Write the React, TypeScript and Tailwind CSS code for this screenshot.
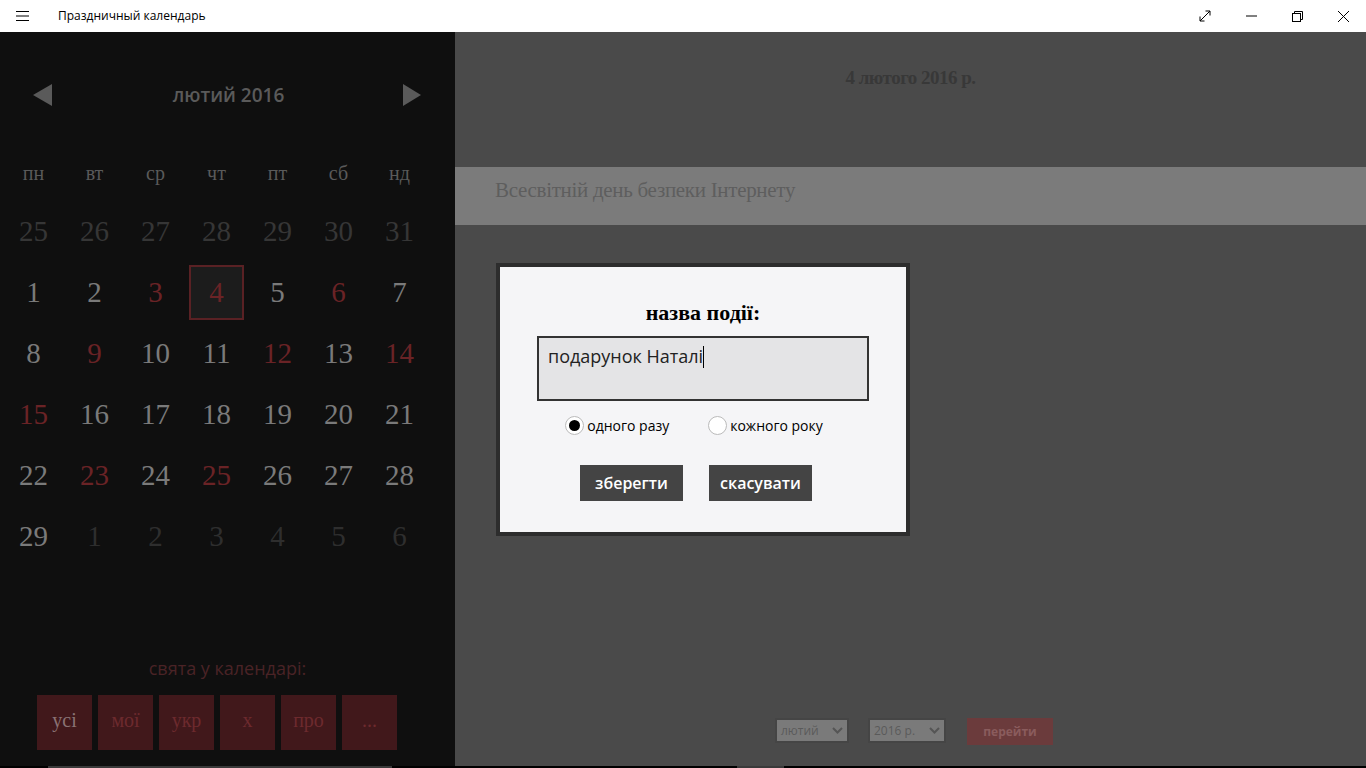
import React from "react";

const sans = { fontFamily: '"Segoe UI", "Open Sans", "Noto Sans", sans-serif' };
const serif = { fontFamily: '"Liberation Serif", "DejaVu Serif", serif' };

type Day = { n: number; c: "prev" | "cur" | "red" | "next" };

const rows: Day[][] = [
  [25, 26, 27, 28, 29, 30, 31].map((n) => ({ n, c: "prev" as const })),
  [
    { n: 1, c: "cur" }, { n: 2, c: "cur" }, { n: 3, c: "red" }, { n: 4, c: "red" }, { n: 5, c: "cur" }, { n: 6, c: "red" }, { n: 7, c: "cur" },
  ],
  [
    { n: 8, c: "cur" }, { n: 9, c: "red" }, { n: 10, c: "cur" }, { n: 11, c: "cur" }, { n: 12, c: "red" }, { n: 13, c: "cur" }, { n: 14, c: "red" },
  ],
  [
    { n: 15, c: "red" }, { n: 16, c: "cur" }, { n: 17, c: "cur" }, { n: 18, c: "cur" }, { n: 19, c: "cur" }, { n: 20, c: "cur" }, { n: 21, c: "cur" },
  ],
  [
    { n: 22, c: "cur" }, { n: 23, c: "red" }, { n: 24, c: "cur" }, { n: 25, c: "red" }, { n: 26, c: "cur" }, { n: 27, c: "cur" }, { n: 28, c: "cur" },
  ],
  [
    { n: 29, c: "cur" }, { n: 1, c: "next" }, { n: 2, c: "next" }, { n: 3, c: "next" }, { n: 4, c: "next" }, { n: 5, c: "next" }, { n: 6, c: "next" },
  ],
];

const colorOf = (c: Day["c"]) =>
  c === "prev" ? "text-[#363636]" : c === "next" ? "text-[#2e2e2e]" : c === "red" ? "text-[#6a2326]" : "text-[#7a7a7a]";

function TitleBar() {
  return (
    <div className="h-[32px] bg-white flex items-center text-black shrink-0" style={sans}>
      <div className="w-[46px] flex justify-center">
        <svg width="14" height="12" viewBox="0 0 14 12">
          <path d="M0 1.5h13M0 6h13M0 10.5h13" stroke="#000" strokeWidth="1" />
        </svg>
      </div>
      <div className="ml-[12px] text-[12px]">Праздничный календарь</div>
      <div className="flex-1" />
      <div className="w-[46px] flex justify-center">
        <svg width="12" height="12" viewBox="0 0 12 12" fill="none" stroke="#000" strokeWidth="1">
          <path d="M1 11L11 1M6.5 1H11V5.5M1 6.5V11H5.5" />
        </svg>
      </div>
      <div className="w-[46px] flex justify-center">
        <svg width="11" height="2" viewBox="0 0 11 2"><path d="M0 1h11" stroke="#000" strokeWidth="1" /></svg>
      </div>
      <div className="w-[46px] flex justify-center">
        <svg width="11" height="11" viewBox="0 0 11 11" fill="none" stroke="#000" strokeWidth="1">
          <rect x="0.5" y="2.5" width="8" height="8" />
          <path d="M2.5 2.5V0.5h8v8h-2" />
        </svg>
      </div>
      <div className="w-[46px] flex justify-center">
        <svg width="11" height="11" viewBox="0 0 11 11" stroke="#000" strokeWidth="1"><path d="M0 0L11 11M11 0L0 11" /></svg>
      </div>
    </div>
  );
}

function LeftPanel() {
  const heads = ["пн", "вт", "ср", "чт", "пт", "сб", "нд"];
  const btns = ["усі", "мої", "укр", "х", "про", "..."];
  return (
    <div className="w-[455px] bg-[#0f0f0f] flex flex-col shrink-0">
      <div className="mt-[43px] h-[40px] flex items-center px-[33px]">
        <svg width="20" height="22" viewBox="0 0 20 22"><path d="M0 11L19 0V22Z" fill="#5a5a5a" /></svg>
        <div className="flex-1 text-center text-[19px] font-semibold text-[#5a5a5a] ml-[2px]" style={sans}>лютий 2016</div>
        <svg width="20" height="22" viewBox="0 0 20 22"><path d="M19 11L1 0V22Z" fill="#5a5a5a" /></svg>
      </div>
      <div className="mt-[43px] ml-[3px] grid grid-cols-[repeat(7,61px)] h-[28px] items-center" style={serif}>
        {heads.map((h) => (
          <div key={h} className="text-center text-[20px] text-[#5a5a5a]">{h}</div>
        ))}
      </div>
      <div className="mt-[15px] ml-[3px] grid grid-cols-[repeat(7,61px)] grid-rows-[repeat(6,61px)]" style={serif}>
        {rows.flat().map((d, i) => (
          <div key={i} className="flex items-center justify-center">
            {i === 10 ? (
              <div className="w-[55px] h-[55px] border-2 border-[#5a2124] bg-[#1c1c1c] flex items-center justify-center text-[29px] text-[#6a2326]">
                {d.n}
              </div>
            ) : (
              <span className={`text-[29px] ${colorOf(d.c)}`}>{d.n}</span>
            )}
          </div>
        ))}
      </div>
      <div className="mt-[88px] text-center text-[18px] text-[#4a2326] h-[26px] leading-[26px]" style={sans}>свята у календарі:</div>
      <div className="mt-[14px] ml-[37px] flex gap-[6px]" style={serif}>
        {btns.map((b, i) => (
          <div key={b} className={`w-[55px] h-[55px] bg-[#41181b] flex items-center justify-center pb-[5px] text-[20px] ${i === 0 ? "text-[#8a7274]" : "text-[#6d2a2e]"}`}>
            {b}
          </div>
        ))}
      </div>
    </div>
  );
}

function Dialog() {
  return (
    <div className="absolute left-[41px] top-[231px] w-[414px] h-[273px] border-[4px] border-[#2d2d2d] bg-[#f5f5f7] flex flex-col items-center">
      <div className="mt-[31px] text-[22px] font-bold text-black leading-[30px]" style={serif}>назва події:</div>
      <div className="mt-[8px] w-[332px] h-[65px] border-2 border-[#333] bg-[#e4e4e6] px-[9px] pt-[5px] text-[18px] text-[#222] flex items-start" style={sans}>
        <span>подарунок Наталі</span>
        <span className="inline-block w-[1px] h-[22px] bg-black mt-[3px]" />
      </div>
      <div className="mt-[14px] flex items-center text-[14px] text-black mr-[18px]" style={sans}>
        <div className="flex items-center">
          <div className="w-[19px] h-[19px] rounded-full border border-[#bbb] bg-white flex items-center justify-center">
            <div className="w-[11px] h-[11px] rounded-full bg-black" />
          </div>
          <span className="ml-[3px]">одного разу</span>
        </div>
        <div className="flex items-center ml-[39px]">
          <div className="w-[19px] h-[19px] rounded-full border border-[#bbb] bg-white" />
          <span className="ml-[3px]">кожного року</span>
        </div>
      </div>
      <div className="mt-[29px] flex gap-[26px] mr-[14px]" style={sans}>
        <div className="w-[103px] h-[36px] bg-[#444] text-white text-[16px] font-semibold flex items-center justify-center">зберегти</div>
        <div className="w-[103px] h-[36px] bg-[#444] text-white text-[16px] font-semibold flex items-center justify-center">скасувати</div>
      </div>
    </div>
  );
}

function RightPanel() {
  return (
    <div className="flex-1 bg-[#4a4a4a] flex flex-col relative">
      <div className="h-[135px] flex justify-center">
        <div className="mt-[32px] text-[19px] font-bold text-[#383838] tracking-[-0.5px]" style={serif}>4 лютого 2016 р.</div>
      </div>
      <div className="h-[58px] bg-[#7b7b7b] flex items-center pl-[40px] pb-[10px]">
        <span className="text-[21px] text-[#5e5e5e] tracking-[-0.3px]" style={serif}>Всесвітній день безпеки Інтернету</span>
      </div>
      <div className="flex-1" />
      <div className="h-[48px] flex items-start pl-[320px]" style={sans}>
        <div className="w-[74px] h-[25px] bg-[#7a7a7a] border-2 border-[#454545] flex items-center justify-between px-[4px] text-[12px] text-[#5a5a5a]">
          <span>лютий</span>
          <svg width="11" height="7" viewBox="0 0 11 7" fill="none" stroke="#555" strokeWidth="2"><path d="M1 1l4.5 4.5L10 1" /></svg>
        </div>
        <div className="ml-[19px] w-[78px] h-[25px] bg-[#7a7a7a] border-2 border-[#454545] flex items-center justify-between px-[4px] text-[12px] text-[#5a5a5a]">
          <span>2016 р.</span>
          <svg width="11" height="7" viewBox="0 0 11 7" fill="none" stroke="#555" strokeWidth="2"><path d="M1 1l4.5 4.5L10 1" /></svg>
        </div>
        <div className="ml-[21px] w-[86px] h-[27px] bg-[#6b3b3c] flex items-center justify-center text-[12px] font-bold text-[#8a5c5d]">перейти</div>
      </div>
      <Dialog />
    </div>
  );
}

export default function App() {
  return (
    <div className="w-[1366px] h-[768px] flex flex-col overflow-hidden bg-black">
      <TitleBar />
      <div className="flex h-[734px]">
        <LeftPanel />
        <RightPanel />
      </div>
      <div className="h-[2px] bg-black relative">
        <div className="absolute left-[48px] w-[344px] h-[2px] bg-[#3a3a3a]" />
        <div className="absolute left-[737px] w-[47px] h-[2px] bg-[#3a3a3a]" />
      </div>
    </div>
  );
}
